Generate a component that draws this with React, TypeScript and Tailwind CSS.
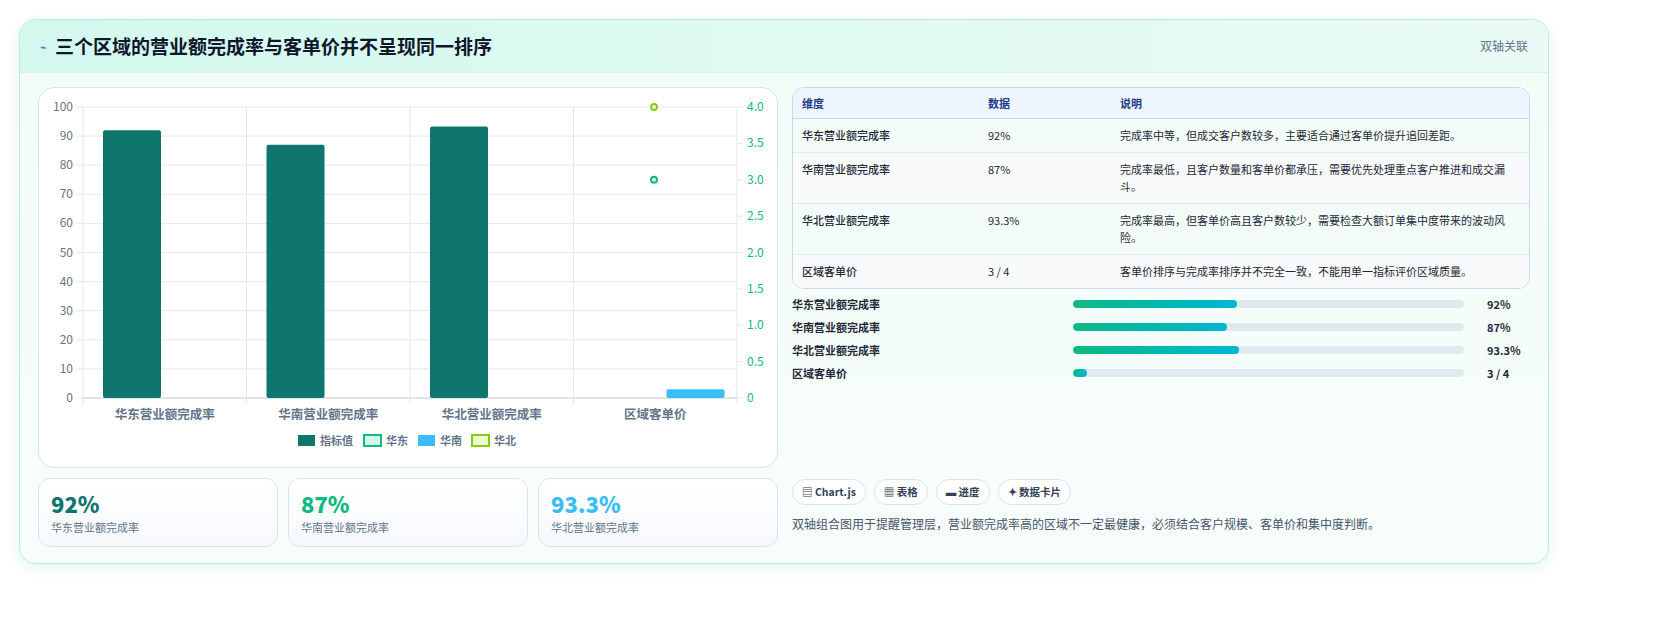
import React from 'react';

const font = { fontFamily: '"Noto Sans CJK SC", "Noto Sans", sans-serif' };

function Chart() {
  const x0 = 82, x1 = 736, yTop = 107, yBot = 398;
  const h = yBot - yTop;
  const slot = (x1 - x0) / 4;
  const yL = (v: number) => yBot - (v / 100) * h;
  const yR = (v: number) => yBot - (v / 4) * h;
  const cats = ['华东营业额完成率', '华南营业额完成率', '华北营业额完成率', '区域客单价'];
  const vals = [92, 87, 93.3];
  return (
    <svg width="740" height="380" viewBox="38 88 740 380" className="block">
      {Array.from({ length: 11 }).map((_, i) => (
        <g key={i}>
          <line x1={x0 - 6} x2={x1} y1={yL(i * 10)} y2={yL(i * 10)} stroke="#e5e7eb" />
          <text x={x0 - 10} y={yL(i * 10) + 4} textAnchor="end" fontSize="12" fill="#6b7280">{i * 10}</text>
        </g>
      ))}
      {Array.from({ length: 9 }).map((_, i) => (
        <g key={i}>
          <line x1={x1} x2={x1 + 6} y1={yR(i * 0.5)} y2={yR(i * 0.5)} stroke="#e5e7eb" />
          <text x={x1 + 10} y={yR(i * 0.5) + 4} fontSize="12" fill="#10b981">{i === 0 ? '0' : (i * 0.5).toFixed(1)}</text>
        </g>
      ))}
      {[0, 1, 2, 3, 4].map((i) => (
        <line key={i} x1={x0 + i * slot} x2={x0 + i * slot} y1={yTop} y2={yBot + 6} stroke="#e5e7eb" />
      ))}
      <line x1={x0} x2={x1} y1={yBot} y2={yBot} stroke="#d1d5db" />
      {vals.map((v, i) => (
        <rect key={i} x={x0 + i * slot + 20} y={yL(v)} width="58" height={yBot - yL(v)} rx="2" fill="#0f766e" />
      ))}
      <rect x={x0 + 3 * slot + 93} y={yL(3)} width="58" height={yBot - yL(3)} rx="2" fill="#38bdf8" />
      <circle cx={653} cy={yR(4)} r="3" fill="#ecfccb" stroke="#84cc16" strokeWidth="2" />
      <circle cx={653} cy={yR(3)} r="3" fill="#d1fae5" stroke="#10b981" strokeWidth="2" />
      {cats.map((c, i) => (
        <text key={c} x={x0 + i * slot + slot / 2} y={419} textAnchor="middle" fontSize="12.5" fill="#64748b" fontWeight="600">{c}</text>
      ))}
      <g fontSize="11" fill="#64748b" fontWeight="600">
        <rect x="297" y="435" width="17" height="11" fill="#0f766e" />
        <text x="319" y="445">指标值</text>
        <rect x="363" y="435" width="17" height="11" fill="#d1fae5" stroke="#10b981" strokeWidth="2" />
        <text x="385" y="445">华东</text>
        <rect x="417" y="435" width="17" height="11" fill="#38bdf8" />
        <text x="439" y="445">华南</text>
        <rect x="471" y="435" width="17" height="11" fill="#ecfccb" stroke="#84cc16" strokeWidth="2" />
        <text x="493" y="445">华北</text>
      </g>
    </svg>
  );
}

const rows = [
  ['华东营业额完成率', '92%', '完成率中等，但成交客户数较多，主要适合通过客单价提升追回差距。'],
  ['华南营业额完成率', '87%', '完成率最低，且客户数量和客单价都承压，需要优先处理重点客户推进和成交漏斗。'],
  ['华北营业额完成率', '93.3%', '完成率最高，但客单价高且客户数较少，需要检查大额订单集中度带来的波动风险。'],
  ['区域客单价', '3 / 4', '客单价排序与完成率排序并不完全一致，不能用单一指标评价区域质量。'],
];

const bars = [
  ['华东营业额完成率', 42, '92%'],
  ['华南营业额完成率', 39.5, '87%'],
  ['华北营业额完成率', 42.5, '93.3%'],
  ['区域客单价', 3.5, '3 / 4'],
] as const;

export default function App() {
  return (
    <div className="w-[1669px] h-[623px] bg-white pt-[19px] pl-[19px]" style={font}>
      <div className="w-[1530px] h-[545px] rounded-2xl border border-[#b9ecdc] bg-gradient-to-b from-[#f1fdf8] to-[#f8fdfc] shadow-[0_4px_14px_rgba(16,185,129,0.12)] overflow-hidden">
        <div className="h-[53px] flex items-center justify-between px-5 bg-gradient-to-r from-[#d3f8ee] to-[#e9fbf4] border-b border-[#d5f3ea]">
          <div className="flex items-center gap-2">
            <span className="text-[#2563eb] text-[11px]">⌁</span>
            <span className="text-[19px] font-bold text-[#0f172a]">三个区域的营业额完成率与客单价并不呈现同一排序</span>
          </div>
          <span className="text-[12px] text-[#64748b]">双轴关联</span>
        </div>
        <div className="flex gap-[14px] px-[18px] pt-[14px]">
          <div className="w-[740px] flex flex-col gap-[10px]">
            <div className="h-[381px] rounded-2xl border border-[#dbe4ee] bg-white overflow-hidden">
              <Chart />
            </div>
            <div className="grid grid-cols-3 gap-[10px]">
              {[['92%', 'text-[#0f766e]', '华东营业额完成率'], ['87%', 'text-[#10b981]', '华南营业额完成率'], ['93.3%', 'text-[#38bdf8]', '华北营业额完成率']].map(([v, c, l]) => (
                <div key={l} className="h-[69px] rounded-xl border border-[#dbe4ee] bg-gradient-to-b from-white to-[#f6f9fc] px-3 pt-[10px]">
                  <div className={`text-[22px] font-extrabold leading-7 ${c}`}>{v}</div>
                  <div className="text-[11px] text-[#64748b] mt-[2px]">{l}</div>
                </div>
              ))}
            </div>
          </div>
          <div className="w-[740px] flex flex-col">
            <div className="rounded-xl border border-[#cbd9e6] overflow-hidden bg-white text-[11px]">
              <div className="grid grid-cols-[186px_132px_1fr] h-[31px] items-center px-[9px] bg-[#eef5fe] text-[#1e3a8a] font-semibold border-b border-[#cbd9e6]">
                <span>维度</span><span>数据</span><span>说明</span>
              </div>
              {rows.map((r, i) => (
                <div key={i} className={`grid grid-cols-[186px_132px_1fr] px-[9px] py-[8px] leading-[17px] text-[#1f2937] ${i < 3 ? 'border-b border-[#e2e8f0]' : ''} ${i % 2 === 0 ? 'bg-[#f3fcf8]' : 'bg-[#f8fafc]'}`}>
                  <span className="font-medium">{r[0]}</span><span>{r[1]}</span><span className="pr-3">{r[2]}</span>
                </div>
              ))}
            </div>
            <div className="flex flex-col gap-[9px] mt-[8px]">
              {bars.map(([l, w, v]) => (
                <div key={l} className="flex items-center h-[14px] text-[11px] font-semibold text-[#1f2937]">
                  <span className="w-[281px]">{l}</span>
                  <div className="w-[391px] h-[8px] rounded-full bg-[#e2e8f0] overflow-hidden">
                    <div className="h-full rounded-full bg-gradient-to-r from-[#10b981] to-[#06b6d4]" style={{ width: `${w}%` }} />
                  </div>
                  <span className="ml-[23px]">{v}</span>
                </div>
              ))}
            </div>
            <div className="mt-auto flex gap-[8px] pt-2">
              {['▤ Chart.js', '▦ 表格', '▬ 进度', '✦ 数据卡片'].map((t) => (
                <span key={t} className="h-[26px] px-[9px] rounded-full border border-[#dbe4ee] bg-white text-[10.5px] font-semibold text-[#334155] flex items-center">{t}</span>
              ))}
            </div>
            <div className="text-[12px] text-[#475569] mt-[10px] mb-[14px]">双轴组合图用于提醒管理层，营业额完成率高的区域不一定最健康，必须结合客户规模、客单价和集中度判断。</div>
          </div>
        </div>
      </div>
    </div>
  );
}
